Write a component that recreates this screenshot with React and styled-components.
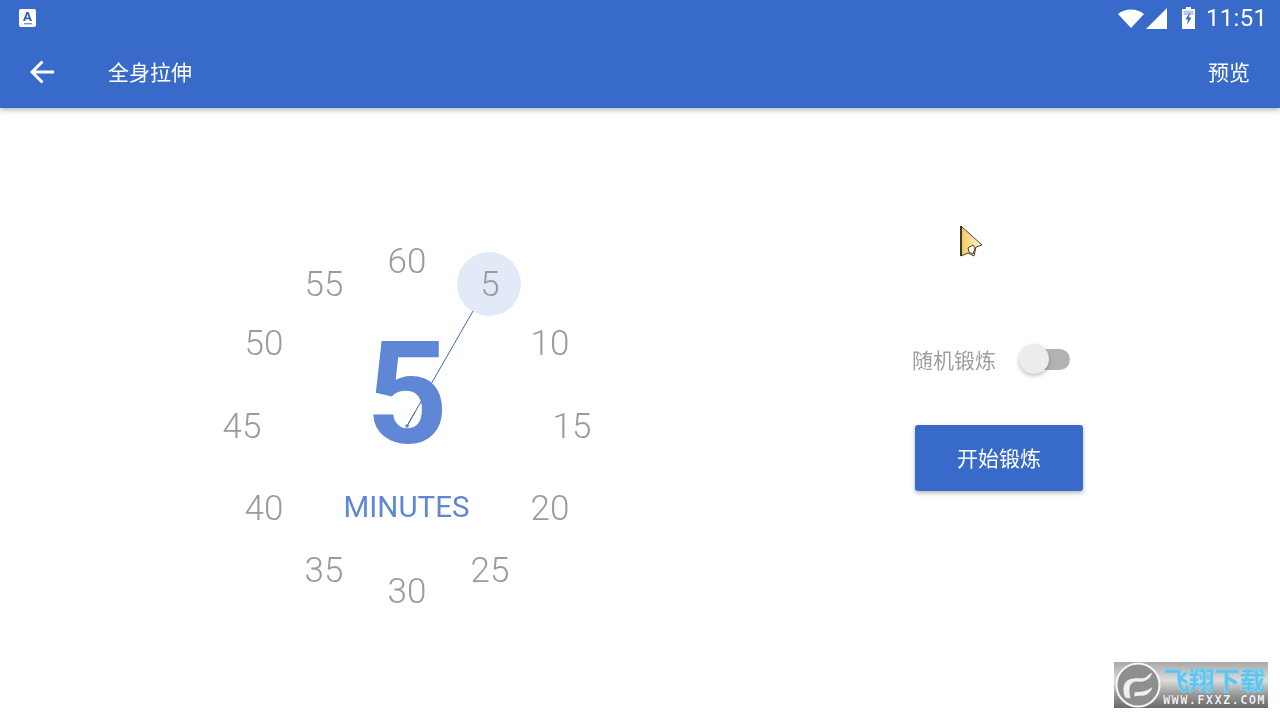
import React from 'react';
import styled, { createGlobalStyle, css } from 'styled-components';

const CJK = `'Roboto', 'Noto Sans CJK SC', sans-serif`;
const BLUE = '#386ac9';

// own layer, so the text gets the grey antialiasing the capture has
const softText = css`
  will-change: transform;
`;

const GlobalStyle = createGlobalStyle`
  html, body {
    margin: 0;
    padding: 0;
    background: #fff;
    overflow: hidden;
  }
  * { box-sizing: border-box; }
`;

const Screen = styled.div`
  position: relative;
  width: 1280px;
  height: 720px;
  display: flex;
  flex-direction: column;
  background: #fff;
  font-family: ${CJK};
`;

const AppBar = styled.header`
  height: 108px;
  flex: none;
  display: flex;
  flex-direction: column;
  background: ${BLUE};
  box-shadow: 0 2px 5px rgba(0, 0, 0, 0.28);
  color: #fff;
`;

const StatusBar = styled.div`
  height: 36px;
  display: flex;
  align-items: center;
  padding: 0 13px 0 19px;
`;

const StatusRight = styled.div`
  margin-left: auto;
  display: flex;
  align-items: center;
`;

const Clock = styled.span`
  ${softText}
  font-size: 24px;
  margin-left: 11px;
  letter-spacing: 0.3px;
`;

const Toolbar = styled.div`
  height: 72px;
  display: flex;
  align-items: center;
  padding: 0 30px 2px;
  font-size: 21px;
`;

const BackIcon = styled.svg`
  width: 24px;
  height: 24px;
  display: block;
  margin-top: 2px;
`;

const Title = styled.span`
  ${softText}
  margin-left: 54px;
`;

const PreviewAction = styled.span`
  ${softText}
  margin-left: auto;
`;

const Body = styled.main`
  flex: 1;
  display: flex;
  padding: 118px 197px 0 207px;
`;

const Dial = styled.div`
  position: relative;
  width: 400px;
  height: 400px;
  flex: none;
`;

const Tick = styled.span`
  ${softText}
  position: absolute;
  left: ${(props) => props.$x}px;
  top: ${(props) => props.$y}px;
  transform: translate(-50%, -50%);
  font-size: 35px;
  font-weight: 300;
  line-height: 1;
  color: #9b9b9b;
`;

const Handle = styled.div`
  position: absolute;
  left: 250px;
  top: 26px;
  width: 64px;
  height: 64px;
  border-radius: 50%;
  background: #e3eaf7;
`;

const HandLine = styled.svg`
  position: absolute;
  left: 0;
  top: 0;
  width: 400px;
  height: 400px;
`;

const Readout = styled.div`
  ${softText}
  position: absolute;
  left: 0;
  right: 0;
  top: 116px;
  display: flex;
  flex-direction: column;
  align-items: center;
  color: #5f87d6;
`;

const BigValue = styled.span`
  height: 105px;
  font-size: 143px;
  font-weight: 700;
  line-height: 105px;
`;

const Unit = styled.span`
  margin: 45px 1px 0 0;
  font-size: 29.5px;
  line-height: 30px;
`;

const Controls = styled.section`
  margin-left: auto;
  width: 171px;
  padding-top: 110px;
  display: flex;
  flex-direction: column;
`;

const RandomRow = styled.div`
  height: 48px;
  display: flex;
  align-items: center;
`;

const RandomLabel = styled.span`
  ${softText}
  font-size: 21px;
  margin-top: -2px;
  color: #9e9e9e;
`;

const Switch = styled.div`
  position: relative;
  margin: -2px 0 0 28px;
  width: 46px;
  height: 21px;
  border-radius: 11px;
  background: #b2b2b2;
`;

const Knob = styled.div`
  position: absolute;
  left: -5px;
  top: -5px;
  width: 30px;
  height: 30px;
  border-radius: 50%;
  background: #ececec;
  box-shadow: 0 2px 4px rgba(0, 0, 0, 0.25);
`;

const StartButton = styled.button`
  margin: 41px 0 0 3px;
  width: 168px;
  height: 66px;
  border: 0;
  padding: 0 0 2px;
  border-radius: 3px;
  background: ${BLUE};
  color: #fff;
  font-family: inherit;
  font-size: 21px;
  box-shadow: 0 2px 4px rgba(0, 0, 0, 0.3);
`;

const StartLabel = styled.span`
  ${softText}
  display: inline-block;
`;

const Pointer = styled.svg`
  position: absolute;
  left: 958px;
  top: 224px;
  width: 26px;
  height: 34px;
`;

const Watermark = styled.div`
  position: absolute;
  left: 1114px;
  top: 662px;
  width: 154px;
  height: 46px;
  display: flex;
  background: linear-gradient(#a8a8a8 0%, #dcdcdc 40%, #9a9a9a 70%, #6a6a6a 100%);
`;

const WatermarkLogo = styled.svg`
  width: 49px;
  height: 46px;
  flex: none;
`;

const WatermarkText = styled.div`
  display: flex;
  flex-direction: column;
  padding-top: 5px;
`;

const WatermarkName = styled.span`
  font-family: 'Noto Sans CJK SC', sans-serif;
  font-size: 25.5px;
  font-weight: 700;
  line-height: 24px;
  color: #5cc3ee;
  -webkit-text-stroke: 0.7px #7fd3f4;
`;

const WatermarkUrl = styled.span`
  margin-top: 4px;
  font-family: 'DejaVu Sans Mono', monospace;
  font-size: 12px;
  font-weight: 700;
  line-height: 10px;
  letter-spacing: 1.35px;
  color: #f2f2f2;
  text-shadow: 0 0 1px #444;
`;

const TICKS = [
  { value: 60, x: 200, y: 35 },
  { value: 5, x: 282.5, y: 58 },
  { value: 10, x: 343, y: 117 },
  { value: 15, x: 365, y: 200 },
  { value: 20, x: 343, y: 282 },
  { value: 25, x: 282.5, y: 344 },
  { value: 30, x: 200, y: 365 },
  { value: 35, x: 116.5, y: 344 },
  { value: 40, x: 57, y: 282 },
  { value: 45, x: 35, y: 200 },
  { value: 50, x: 57, y: 117 },
  { value: 55, x: 117, y: 58 },
];

function App() {
  return (
    <Screen>
      <GlobalStyle />
      <AppBar>
        <StatusBar>
          <svg width="17" height="18" viewBox="0 0 17 18">
            <rect width="17" height="18" rx="2" fill="#fff" />
            <path d="M4 12 L7.4 3 H9.6 L13 12 H10.9 L10.3 10.2 H6.7 L6.1 12 Z M7.3 8.5 H9.7 L8.5 5 Z" fill="#3a5fa8" fillRule="evenodd" />
            <rect x="5" y="14" width="8" height="1.4" fill="#7f97c6" />
          </svg>
          <StatusRight>
            <svg width="26" height="19" viewBox="0 0 26 19">
              <path d="M0 5 C7 -1 19 -1 26 5 L13 19 Z" fill="#fff" />
            </svg>
            <svg width="21" height="21" viewBox="0 0 21 21" style={{ marginLeft: 2 }}>
              <path d="M21 0 V21 H0 Z" fill="#fff" />
            </svg>
            <svg width="13" height="22" viewBox="0 0 13 22" style={{ marginLeft: 15 }}>
              <path d="M4 0 H9 V2 H13 V22 H0 V2 H4 Z" fill="#fff" />
              <path d="M1.5 3.5 H11.5 V8 H1.5 Z" fill="#b9cbec" />
              <path d="M8 5 L3.5 12.5 H6 L5 18 L9.5 10.5 H7 Z" fill={BLUE} />
            </svg>
            <Clock>11:51</Clock>
          </StatusRight>
        </StatusBar>
        <Toolbar>
          <BackIcon viewBox="0 0 24 24">
            <path d="M24 12 H2 M12.5 1.5 L2 12 L12.5 22.5" fill="none" stroke="#fff" strokeWidth="3" />
          </BackIcon>
          <Title>全身拉伸</Title>
          <PreviewAction>预览</PreviewAction>
        </Toolbar>
      </AppBar>
      <Body>
        <Dial>
          <Handle />
          {TICKS.map((tick) => (
            <Tick key={tick.value} $x={tick.x} $y={tick.y}>
              {tick.value}
            </Tick>
          ))}
          <HandLine viewBox="0 0 400 400">
            <line x1="200" y1="200" x2="266" y2="85" stroke="#3f68b5" strokeWidth="1" />
          </HandLine>
          <Readout>
            <BigValue>5</BigValue>
            <Unit>MINUTES</Unit>
          </Readout>
          <HandLine viewBox="0 0 400 400">
            <line x1="200" y1="200" x2="208" y2="186" stroke="#3f68b5" strokeWidth="1" />
            <circle cx="200" cy="200" r="1.8" fill="#6d7f9f" />
          </HandLine>
        </Dial>
        <Controls>
          <RandomRow>
            <RandomLabel>随机锻炼</RandomLabel>
            <Switch>
              <Knob />
            </Switch>
          </RandomRow>
          <StartButton>
            <StartLabel>开始锻炼</StartLabel>
          </StartButton>
        </Controls>
      </Body>
      <Pointer viewBox="0 0 26 34">
        <defs>
          <linearGradient id="pointerFill" x1="0" y1="0" x2="1" y2="0">
            <stop offset="0" stopColor="#efc95f" />
            <stop offset="1" stopColor="#fff7d6" />
          </linearGradient>
        </defs>
        <path d="M3 2 L24 21 L18 23 L16 32 L10 29 L3 32 Z" fill="url(#pointerFill)" stroke="#3a3010" strokeWidth="0.9" strokeLinejoin="round" />
        <path d="M10 24 L15 21 L17 24 L15 30 L11 28 Z" fill="#fff" stroke="#3a3010" strokeWidth="0.9" />
        <path d="M3 2 V32" stroke="#2a2410" strokeWidth="1.6" />
      </Pointer>
      <Watermark>
        <WatermarkLogo viewBox="0 0 49 46">
          <circle cx="24" cy="23" r="21.5" fill="#8f8f8f" stroke="#f5f5f5" strokeWidth="2" />
          <path d="M11 36 C7 26 9 17 20 16 C27 15 30 18 35 12 L39 10 C37 17 31 21 24 20 C17 19 14 24 17 37 Z" fill="#efefef" stroke="#777" strokeWidth="0.6" />
          <path d="M20 30 C26 29 32 30 39 24 C38 30 33 35 26 34 L20 35 Z" fill="#efefef" stroke="#777" strokeWidth="0.6" />
        </WatermarkLogo>
        <WatermarkText>
          <WatermarkName>飞翔下载</WatermarkName>
          <WatermarkUrl>WWW.FXXZ.COM</WatermarkUrl>
        </WatermarkText>
      </Watermark>
    </Screen>
  );
}

export default App;
